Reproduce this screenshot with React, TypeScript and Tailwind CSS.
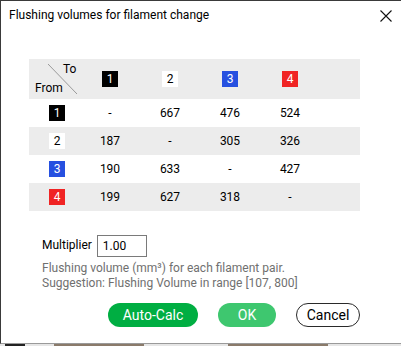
import React from "react";

type Filament = { id: number; bg: string; fg: string };

const filaments: Filament[] = [
  { id: 1, bg: "bg-black", fg: "text-white" },
  { id: 2, bg: "bg-white", fg: "text-black" },
  { id: 3, bg: "bg-[#2650e0]", fg: "text-white" },
  { id: 4, bg: "bg-[#f02424]", fg: "text-white" },
];

const volumes: string[][] = [
  ["-", "667", "476", "524"],
  ["187", "-", "305", "326"],
  ["190", "633", "-", "427"],
  ["199", "627", "318", "-"],
];

function Badge({ f }: { f: Filament }) {
  return (
    <span
      className={`inline-flex h-4 w-4 items-center justify-center text-[12px] leading-none ${f.bg} ${f.fg}`}
    >
      {f.id}
    </span>
  );
}

export default function App() {
  return (
    <div
      className="h-[346px] w-[401px] overflow-hidden bg-[#e6e6e6] text-black"
      style={{ fontFamily: "Roboto, 'Noto Sans', sans-serif" }}
    >
      <div className="flex h-[344px] flex-col border-l border-t border-b border-[#3a3a3a] border-b-[#9a9a9a] bg-white">
        {/* title bar */}
        <div className="flex h-[40px] items-start justify-between pl-[8px] pr-[8px] pt-[6px]">
          <span className="text-[12px] leading-[16px]">Flushing volumes for filament change</span>
          <svg width="12" height="12" viewBox="0 0 12 12" className="mt-[3px] mr-[1px]">
            <path d="M0.5 0.5 L11.5 11.5 M11.5 0.5 L0.5 11.5" stroke="#111" strokeWidth="1.1" />
          </svg>
        </div>

        {/* table */}
        <div className="ml-[28px] mt-[18px] w-[331px] text-[12px]">
          <div className="grid h-[40px] grid-cols-[51px_60px_60px_60px_60px_1fr] items-center bg-[#ececec]">
            <div className="relative h-full">
              <svg className="absolute left-[19px] top-[5px]" width="30" height="31" viewBox="0 0 30 31">
                <line x1="0" y1="0" x2="29" y2="30" stroke="#9a9a9a" strokeWidth="1" />
              </svg>
              <span className="absolute left-[34px] top-[2px] leading-[16px]">To</span>
              <span className="absolute left-[6px] top-[21px] leading-[16px]">From</span>
            </div>
            {filaments.map((f) => (
              <div key={f.id} className="flex justify-center">
                <Badge f={f} />
              </div>
            ))}
            <div />
          </div>
          {volumes.map((row, i) => (
            <div
              key={i}
              className={`grid h-[28px] grid-cols-[51px_60px_60px_60px_60px_1fr] items-center ${
                i % 2 === 1 ? "bg-[#ececec]" : "bg-white"
              }`}
            >
              <div className="flex justify-center pl-[5px]">
                <Badge f={filaments[i]} />
              </div>
              {row.map((v, j) => (
                <div key={j} className="text-center">
                  {v}
                </div>
              ))}
              <div />
            </div>
          ))}
        </div>

        {/* multiplier */}
        <div className="ml-[41px] mt-[24px] flex items-start gap-[5px] text-[12px]">
          <span className="mt-[2px] leading-[16px]">Multiplier</span>
          <div className="flex h-[22px] w-[50px] items-center border border-[#7a7a7a] pl-[5px] leading-none">
            1.00
          </div>
        </div>
        <div className="ml-[41px] mt-[4px] text-[12px] leading-[15px] text-[#707070]">
          <div>Flushing volume (mm³) for each filament pair.</div>
          <div>Suggestion: Flushing Volume in range [107, 800]</div>
        </div>

        {/* buttons */}
        <div className="mr-[41px] mt-[12px] flex justify-end gap-[20px] text-[14px]">
          <button className="h-[24px] w-[90px] rounded-full bg-[#00ae42] leading-none text-white">
            Auto-Calc
          </button>
          <button className="h-[24px] w-[58px] rounded-full bg-[#3ec76f] leading-none text-white">
            OK
          </button>
          <button className="h-[24px] w-[64px] rounded-full border border-[#2a2a2a] bg-white leading-none text-black">
            Cancel
          </button>
        </div>
      </div>
      <div className="flex h-[2px] items-start gap-[4px] pl-[5px]">
        <div className="h-[2px] w-[20px] bg-[#222]" />
        <div className="ml-[25px] h-[2px] w-[90px] bg-[#8a7a6a]" />
        <div className="ml-[80px] h-[2px] w-[100px] bg-[#8a7a6a]" />
      </div>
    </div>
  );
}
